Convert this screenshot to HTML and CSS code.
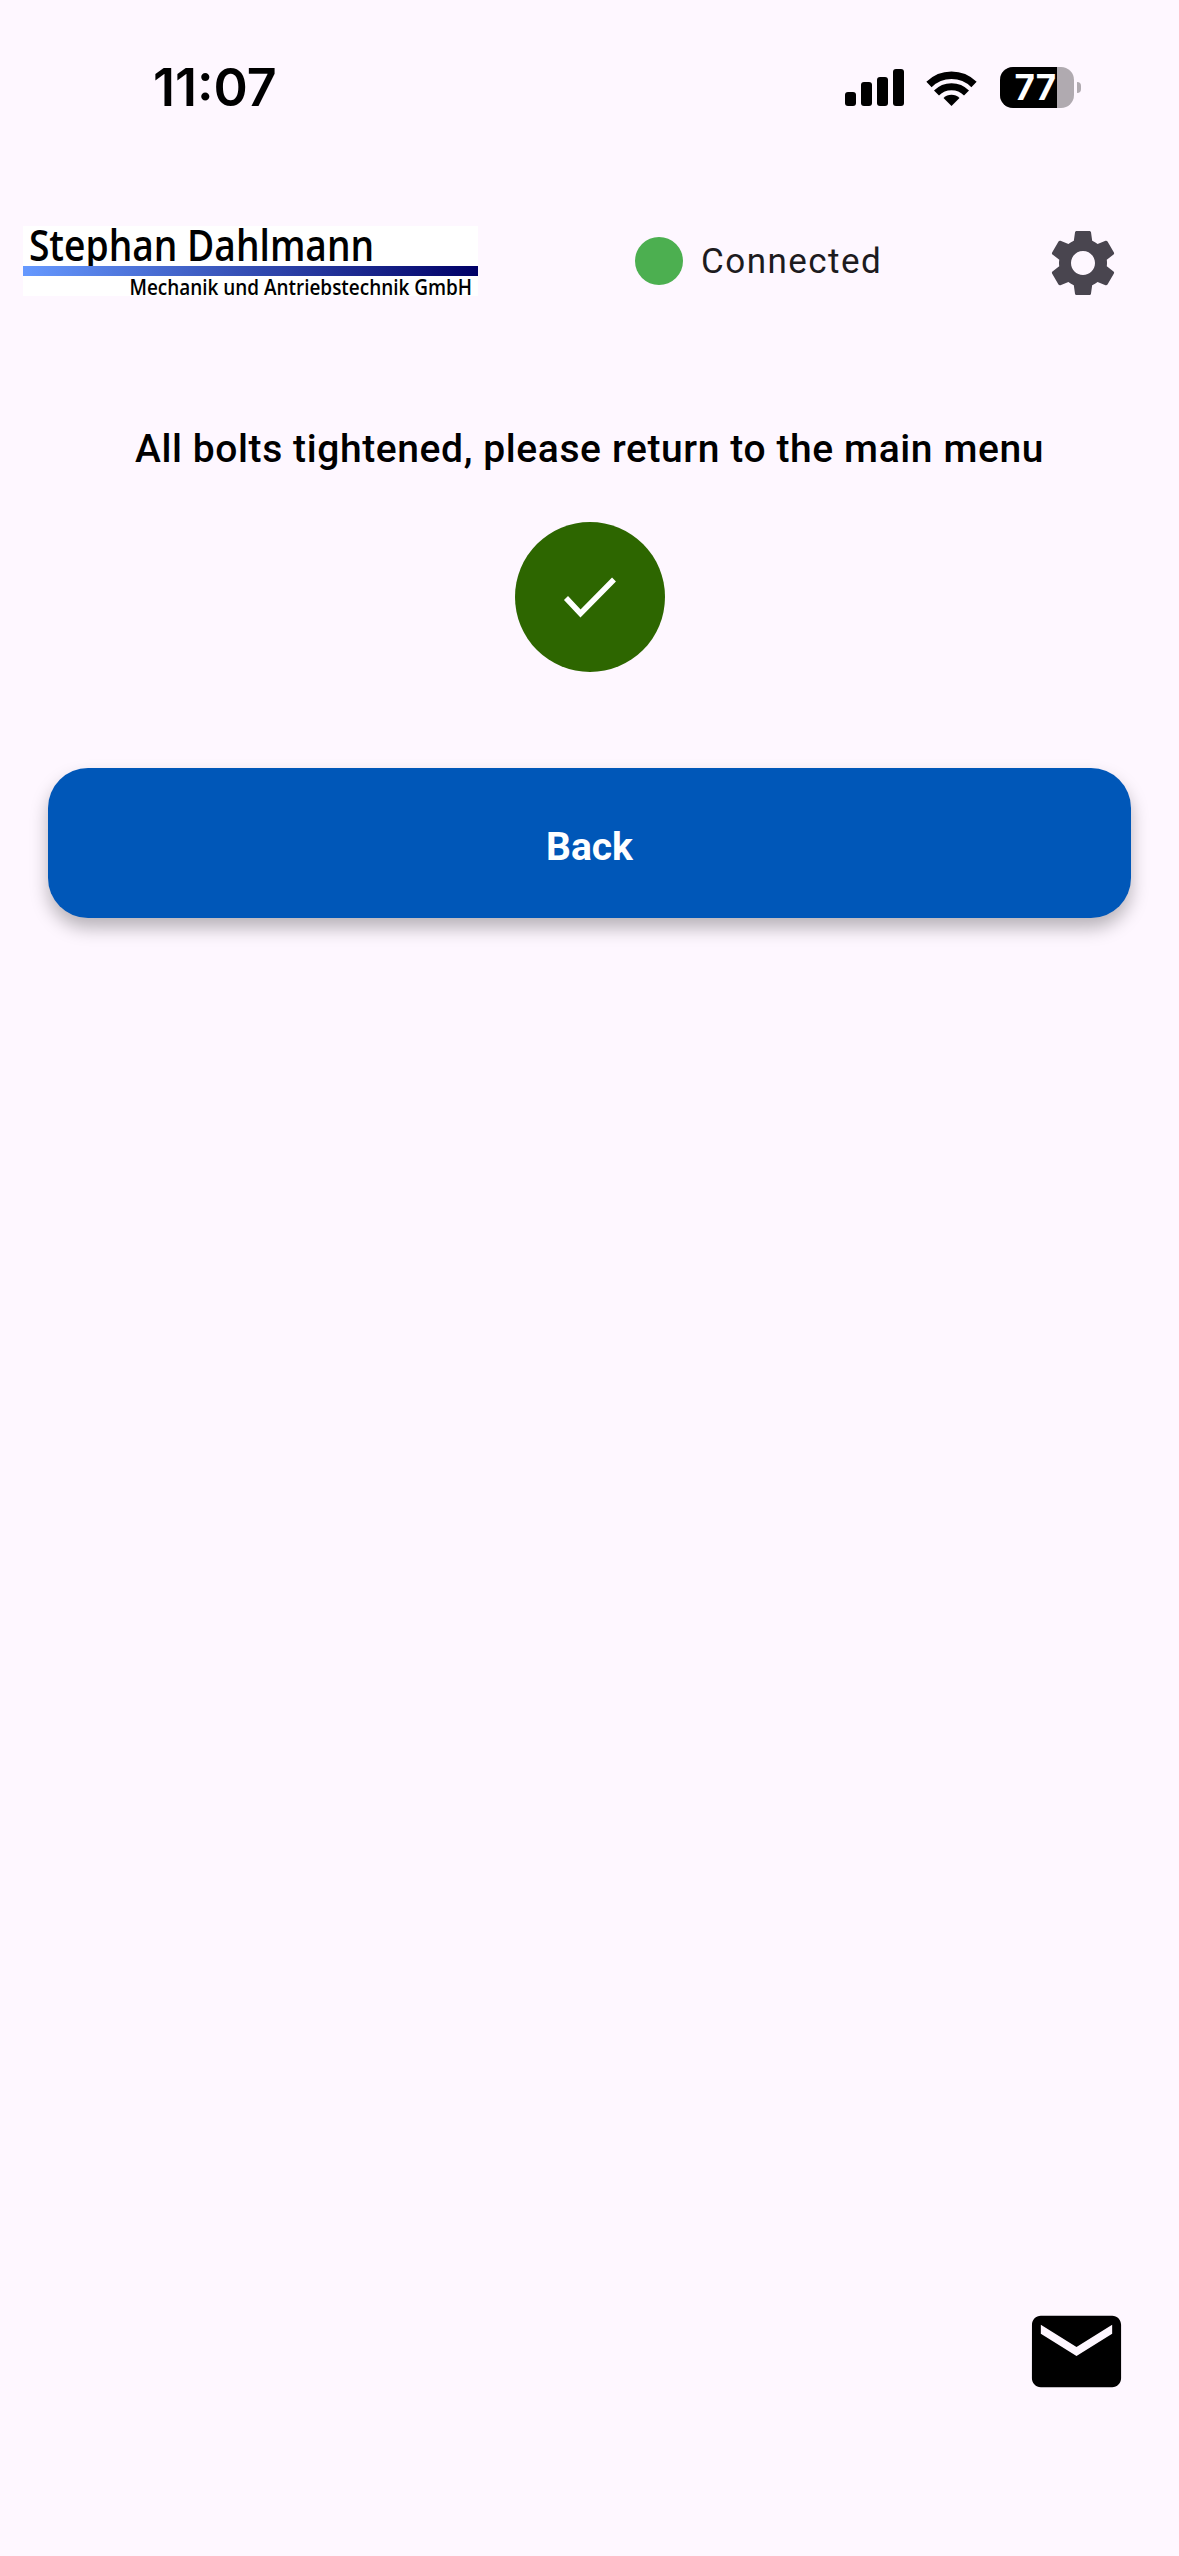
FILE: index.html
```html
<!DOCTYPE html>
<html lang="en">

<head>
    <title>Bolt tightening</title>
    <link rel="stylesheet" href="styles.css">
</head>

<body>
    <div class="page">
        <div class="status">
            <span class="time">11:07</span>
            <div class="status-icons">
                <div class="signal">
                    <span class="bar bar-1"></span>
                    <span class="bar bar-2"></span>
                    <span class="bar bar-3"></span>
                    <span class="bar bar-4"></span>
                </div>
                <svg class="wifi" viewBox="0 0 51 37" width="51" height="37">
                    <path d="M3 15.5 A 32 32 0 0 1 48 15.5" fill="none" stroke="#000" stroke-width="7.5" />
                    <path d="M10.5 24 A 21 21 0 0 1 40.5 24" fill="none" stroke="#000" stroke-width="7" />
                    <path d="M25.5 37 L17.5 29 A 11.5 11.5 0 0 1 33.5 29 Z" fill="#000" />
                </svg>
                <div class="battery">
                    <div class="battery-body">
                        <div class="battery-fill">77</div>
                    </div>
                    <span class="battery-cap"></span>
                </div>
            </div>
        </div>

        <header class="top-bar">
            <div class="logo">
                <div class="logo-name">Stephan Dahlmann</div>
                <div class="logo-line"></div>
                <div class="logo-sub">Mechanik und Antriebstechnik GmbH</div>
            </div>
            <div class="conn">
                <span class="conn-dot"></span>
                <span class="conn-text">Connected</span>
            </div>
            <svg class="gear" viewBox="0 0 24 24" width="80" height="80">
                <path fill="#49454f" d="M19.14 12.94c.04-.3.06-.61.06-.94 0-.32-.02-.64-.07-.94l2.03-1.58c.18-.14.23-.41.12-.61l-1.92-3.32c-.12-.22-.37-.29-.59-.22l-2.39.96c-.5-.38-1.03-.7-1.62-.94l-.36-2.54c-.04-.24-.24-.41-.48-.41h-3.84c-.24 0-.43.17-.47.41l-.36 2.54c-.59.24-1.13.57-1.62.94l-2.39-.96c-.22-.08-.47 0-.59.22L2.74 8.87c-.12.21-.08.47.12.61l2.03 1.58c-.05.3-.09.63-.09.94s.02.64.07.94l-2.03 1.58c-.18.14-.23.41-.12.61l1.92 3.32c.12.22.37.29.59.22l2.39-.96c.5.38 1.03.7 1.62.94l.36 2.54c.05.24.24.41.48.41h3.84c.24 0 .44-.17.47-.41l.36-2.54c.59-.24 1.13-.56 1.62-.94l2.39.96c.22.08.47 0 .59-.22l1.92-3.32c.12-.22.07-.47-.12-.61l-2.01-1.58zM12 15.6c-1.98 0-3.6-1.62-3.6-3.6s1.62-3.6 3.6-3.6 3.6 1.62 3.6 3.6-1.62 3.6-3.6 3.6z" />
            </svg>
        </header>

        <main class="content">
            <h1 class="message">All bolts tightened, please return to the main menu</h1>
            <div class="done">
                <svg viewBox="0 0 150 150" width="150" height="150">
                    <path d="M51 76 L65.5 91.5 L99 57.5" fill="none" stroke="#fff" stroke-width="5.5" />
                </svg>
            </div>
            <button class="back">Back</button>
        </main>

        <div class="mail-row">
            <svg class="mail" viewBox="0 0 24 24" width="107" height="107">
                <path fill="#000" d="M20 4H4c-1.1 0-1.99.9-1.99 2L2 18c0 1.1.9 2 2 2h16c1.1 0 2-.9 2-2V6c0-1.1-.9-2-2-2zm0 4l-8 5-8-5V6l8 5 8-5v2z" />
            </svg>
        </div>
    </div>
</body>

</html>
```

FILE: styles.css
```css
body {
    margin: 0;
    background-color: #fef7ff;
    font-family: Roboto, "Liberation Sans", sans-serif;
}

.page {
    height: 2556px;
    display: flex;
    flex-direction: column;
    overflow: hidden;
}

/* status bar */
.status {
    display: flex;
    justify-content: space-between;
    align-items: center;
    height: 41px;
    margin-top: 67px;
    padding: 0 98px 0 153px;
}

.time {
    font-family: Inter, sans-serif;
    font-size: 52px;
    font-weight: 600;
    color: #000;
}

.status-icons {
    display: flex;
    align-items: center;
    gap: 22px;
}

.signal {
    display: flex;
    align-items: flex-end;
    gap: 5.5px;
    height: 37px;
}

.bar {
    width: 10.5px;
    background-color: #000;
    border-radius: 3px;
}

.bar-1 { height: 14px; }
.bar-2 { height: 24px; }
.bar-3 { height: 29px; }
.bar-4 { height: 37px; }

.battery {
    display: flex;
    align-items: center;
    gap: 3px;
    margin-left: 1.5px;
}

.battery-body {
    width: 74px;
    height: 41px;
    border-radius: 13px;
    background-color: #b0aab0;
    overflow: hidden;
}

.battery-fill {
    width: 57px;
    height: 41px;
    background-color: #000;
    color: #fff;
    font-family: Inter, sans-serif;
    font-size: 35px;
    font-weight: 700;
    line-height: 41px;
    text-align: right;
    padding-right: 1px;
    box-sizing: border-box;
}

.battery-cap {
    width: 4px;
    height: 11px;
    background-color: #b0aab0;
    border-radius: 0 6px 6px 0;
}

/* top bar */
.top-bar {
    display: flex;
    align-items: center;
    height: 80px;
    margin-top: 113px;
    padding: 0 56px 0 23px;
}

.logo {
    width: 455px;
    height: 70px;
    background-color: #fff;
    display: flex;
    flex-direction: column;
    color: #000;
    font-family: "Open Sans", sans-serif;
}

.logo-name {
    height: 40px;
    padding-left: 7px;
    font-size: 44px;
    line-height: 36px;
    font-weight: 600;
    white-space: nowrap;
    transform: scaleX(0.845);
    transform-origin: left center;
}

.logo-line {
    position: relative;
    height: 10px;
    background: linear-gradient(to right, #6699ff, #000066);
}

.logo-sub {
    height: 20px;
    padding-right: 7px;
    font-size: 22px;
    line-height: 21px;
    font-weight: 600;
    text-align: right;
    white-space: nowrap;
    transform: scaleX(0.86);
    transform-origin: right center;
}

.conn {
    display: flex;
    align-items: center;
    gap: 18px;
    margin-left: 157px;
}

.conn-dot {
    width: 48px;
    height: 48px;
    border-radius: 50%;
    background-color: #4caf50;
}

.conn-text {
    font-size: 35px;
    color: #1d1b20;
    letter-spacing: 1.45px;
}

.gear {
    margin-left: auto;
    margin-top: 3px;
}

/* main */
.content {
    display: flex;
    flex-direction: column;
    align-items: center;
    padding: 0 48px;
}

.message {
    margin: 125px 0 0;
    font-size: 39px;
    line-height: 46px;
    font-weight: 500;
    color: #000;
    letter-spacing: 0.6px;
    white-space: nowrap;
}

.done {
    width: 150px;
    height: 150px;
    margin-top: 50px;
    border-radius: 50%;
    background-color: #2d6600;
}

.back {
    width: 100%;
    height: 150px;
    margin-top: 96px;
    padding: 8px 0 0;
    border: none;
    border-radius: 40px;
    background-color: #0057b8;
    color: #fff;
    font-family: Roboto, sans-serif;
    font-size: 39px;
    font-weight: 700;
    box-shadow: 0 10px 18px rgba(0, 0, 0, 0.28);
}

.mail-row {
    margin-top: auto;
    display: flex;
    justify-content: flex-end;
    padding: 0 49px 151px 0;
}
```
